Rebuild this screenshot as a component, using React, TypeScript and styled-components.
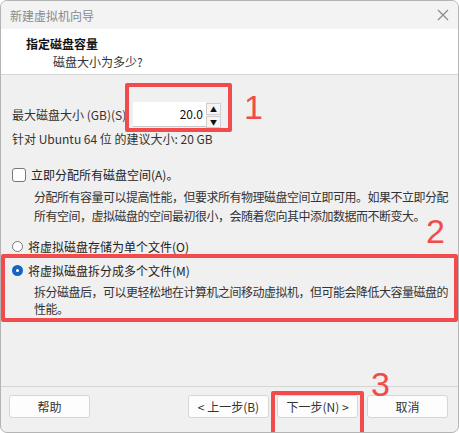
import React, { useState } from 'react';
import styled, { createGlobalStyle } from 'styled-components';

const GlobalStyle = createGlobalStyle`
  body {
    margin: 0;
    background: #ffffff;
    font-family: 'Noto Sans CJK SC', 'Noto Sans', sans-serif;
  }
`;

const Window = styled.div`
  position: relative;
  width: 457px;
  height: 431px;
  border: 1px solid #b4b4b4;
  border-radius: 7px;
  overflow: hidden;
  background: #f0f0f0;
  display: flex;
  flex-direction: column;
  font-size: 12px;
  color: #222;
`;

const TitleBar = styled.div`
  height: 28px;
  flex: none;
  display: flex;
  align-items: center;
  justify-content: space-between;
  padding: 0 8px 0 9px;
  background: #f3f3f3;
  color: #8a8a8a;
  font-size: 12px;
`;

const Header = styled.div`
  height: 39px;
  flex: none;
  background: #ffffff;
  border-bottom: 1px solid #d5d5d5;
  padding: 6px 0 0 25px;
  display: flex;
  flex-direction: column;
  gap: 1px;
  line-height: 17px;
`;

const HeaderTitle = styled.div`
  font-weight: bold;
  color: #111;
`;

const HeaderSub = styled.div`
  padding-left: 27px;
  color: #333;
`;

const Body = styled.div`
  flex: 1;
  padding: 26px 0 0 11px;
  display: flex;
  flex-direction: column;
`;

const SizeRow = styled.div`
  display: flex;
  align-items: center;
  height: 26px;
`;

const Label = styled.span`
  width: 121px;
  color: #333;
`;

const Spin = styled.div`
  display: flex;
  height: 25px;
`;

const SpinInput = styled.div`
  width: 70px;
  background: #fff;
  border-bottom: 1px solid #c8c8c8;
  display: flex;
  align-items: center;
  justify-content: flex-end;
  padding-right: 3px;
  color: #111;
`;

const SpinButtons = styled.div`
  width: 15px;
  display: flex;
  flex-direction: column;
  gap: 1px;
  padding: 1px 0;
`;

const SpinButton = styled.div`
  flex: 1;
  background: #f5f5f5;
  border: 1px solid #cfcfcf;
  display: flex;
  align-items: center;
  justify-content: center;
  font-size: 7px;
  color: #111;
`;

const Hint = styled.div`
  margin-top: 3px;
  color: #333;
  line-height: 17px;
`;

const Option = styled.label<{ $top: number }>`
  margin-top: ${(p) => p.$top}px;
  display: flex;
  align-items: center;
  gap: 5px;
  line-height: 17px;
  color: #222;
`;

const CheckBox = styled.span`
  width: 12px;
  height: 12px;
  border: 1px solid #777;
  border-radius: 3px;
  background: #fff;
`;

const Radio = styled.span<{ $on?: boolean }>`
  width: 11px;
  height: 11px;
  border-radius: 50%;
  box-sizing: border-box;
  background: #fff;
  border: ${(p) => (p.$on ? '4px solid #1565c0' : '1px solid #777')};
`;

const Desc = styled.div<{ $lh: number }>`
  margin-top: 4px;
  padding-left: 22px;
  width: 420px;
  color: #333;
  letter-spacing: -0.5px;
  line-height: ${(p) => p.$lh}px;
`;

const Footer = styled.div`
  height: 37px;
  flex: none;
  border-top: 1px solid #d5d5d5;
  padding: 8px 7px 0 8px;
  display: flex;
  align-items: flex-start;
`;

const Button = styled.button<{ $gap?: number }>`
  width: 81px;
  height: 23px;
  margin-left: ${(p) => p.$gap || 0}px;
  background: #fdfdfd;
  border: 1px solid #d6d6d6;
  border-radius: 3px;
  font-family: inherit;
  font-size: 12px;
  color: #333;
  padding: 0;
`;

const RedBox = styled.div<{ $x: number; $y: number; $w: number; $h: number }>`
  position: absolute;
  left: ${(p) => p.$x}px;
  top: ${(p) => p.$y}px;
  width: ${(p) => p.$w}px;
  height: ${(p) => p.$h}px;
  border: 4px solid #f24b4b;
  border-radius: 2px;
  box-sizing: border-box;
  pointer-events: none;
`;

const Num = styled.div<{ $x: number; $y: number }>`
  position: absolute;
  left: ${(p) => p.$x}px;
  top: ${(p) => p.$y}px;
  font-family: 'Liberation Sans', Arial, sans-serif;
  font-size: 34px;
  line-height: 26px;
  font-weight: 300;
  color: #f24b4b;
`;

const CloseIcon = () => (
  <svg width="14" height="14" viewBox="0 0 14 14">
    <path d="M2 2 L12 12 M12 2 L2 12" stroke="#8a8a8a" strokeWidth="1.2" />
  </svg>
);

const App: React.FC = () => {
  const [split] = useState(true);

  return (
    <>
      <GlobalStyle />
      <Window>
        <TitleBar>
          <span>新建虚拟机向导</span>
          <CloseIcon />
        </TitleBar>
        <Header>
          <HeaderTitle>指定磁盘容量</HeaderTitle>
          <HeaderSub>磁盘大小为多少?</HeaderSub>
        </Header>
        <Body>
          <SizeRow>
            <Label>最大磁盘大小 (GB)(S)</Label>
            <Spin>
              <SpinInput>20.0</SpinInput>
              <SpinButtons>
                <SpinButton>▲</SpinButton>
                <SpinButton>▼</SpinButton>
              </SpinButtons>
            </Spin>
          </SizeRow>
          <Hint>针对 Ubuntu 64 位 的建议大小: 20 GB</Hint>
          <Option $top={19}>
            <CheckBox />
            立即分配所有磁盘空间(A)。
          </Option>
          <Desc $lh={19}>
            分配所有容量可以提高性能，但要求所有物理磁盘空间立即可用。如果不立即分配所有空间，虚拟磁盘的空间最初很小，会随着您向其中添加数据而不断变大。
          </Desc>
          <Option $top={13}>
            <Radio $on={!split} />
            将虚拟磁盘存储为单个文件(O)
          </Option>
          <Option $top={7}>
            <Radio $on={split} />
            将虚拟磁盘拆分成多个文件(M)
          </Option>
          <Desc $lh={17}>
            拆分磁盘后，可以更轻松地在计算机之间移动虚拟机，但可能会降低大容量磁盘的性能。
          </Desc>
        </Body>
        <Footer>
          <Button>帮助</Button>
          <Button $gap={98}>&lt; 上一步(B)</Button>
          <Button $gap={8}>下一步(N) &gt;</Button>
          <Button $gap={9}>取消</Button>
        </Footer>

        <RedBox $x={124} $y={82} $w={107} $h={49} />
        <Num $x={243} $y={93}>1</Num>
        <RedBox $x={0} $y={253} $w={457} $h={68} />
        <Num $x={425} $y={217}>2</Num>
        <RedBox $x={270} $y={390} $w={93} $h={46} />
        <Num $x={370} $y={370}>3</Num>
      </Window>
    </>
  );
};

export default App;
